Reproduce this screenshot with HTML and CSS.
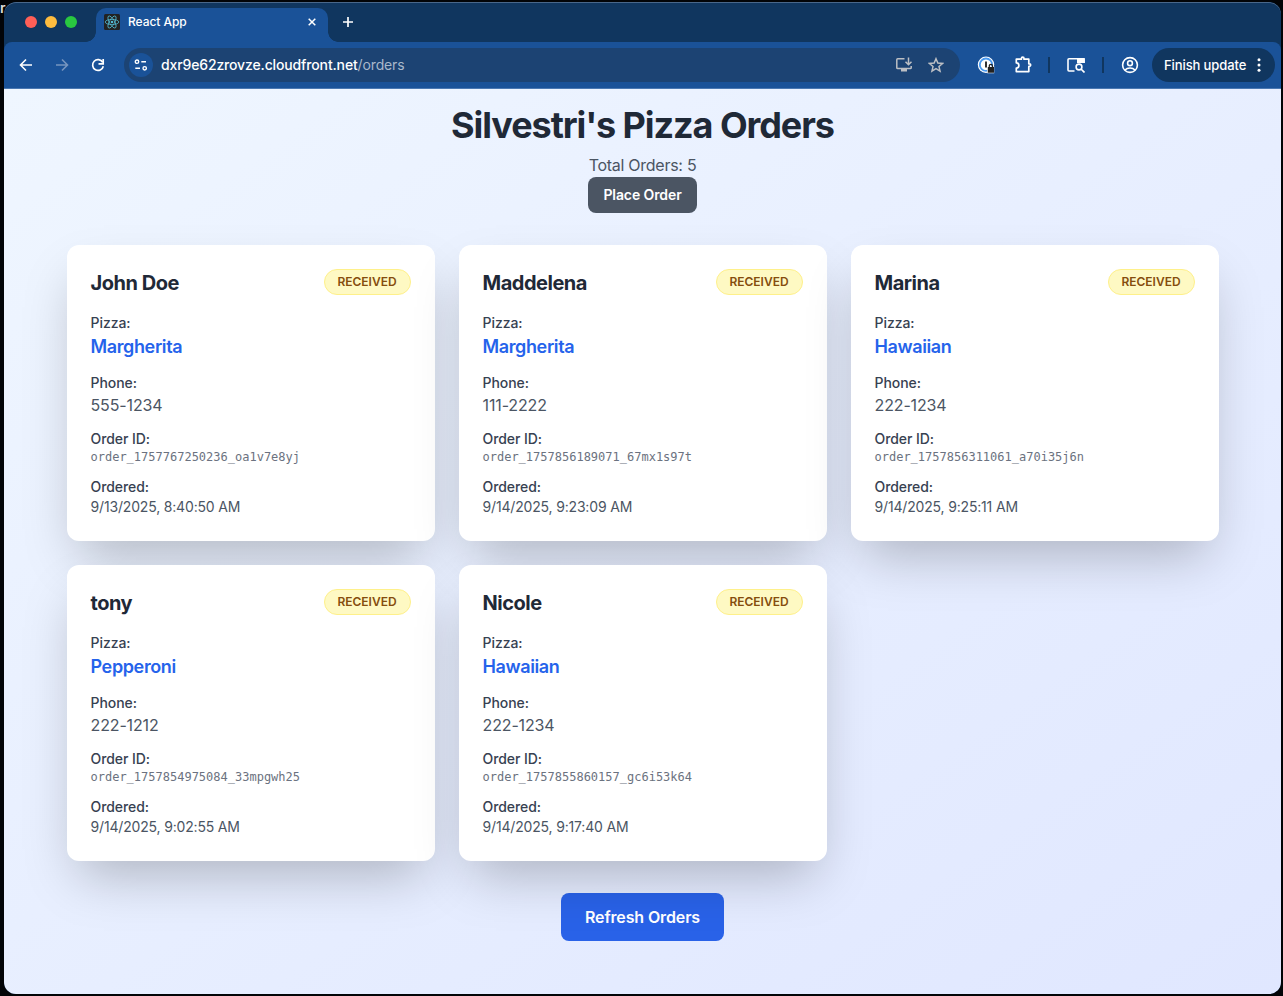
FILE: index.html
```
<!DOCTYPE html>
<html lang="en">
<head>
<meta charset="utf-8">
<title>React App</title>
<link rel="stylesheet" href="styles.css">
</head>
<body>
<span class="desktop-text">r</span>
<div class="window">
  <div class="tabstrip">
    <div class="lights"><i class="red"></i><i class="yellow"></i><i class="green"></i></div>
    <div class="tab">
      <svg class="favicon" width="16" height="16" viewBox="0 0 16 16"><rect width="16" height="16" rx="1.5" fill="#222"/><g fill="none" stroke="#53b9d1" stroke-width=".8"><ellipse cx="8" cy="8" rx="6.8" ry="2.6"/><ellipse cx="8" cy="8" rx="6.8" ry="2.6" transform="rotate(60 8 8)"/><ellipse cx="8" cy="8" rx="6.8" ry="2.6" transform="rotate(120 8 8)"/></g><circle cx="8" cy="8" r="1.3" fill="#53b9d1"/></svg>
      <span class="tab-title">React App</span>
      <svg class="close" width="8" height="8" viewBox="0 0 8 8"><path d="M.7.7l6.6 6.6M7.3.7L.7 7.3" stroke="#fff" stroke-width="1.5"/></svg>
    </div>
    <svg class="newtab" width="12" height="12" viewBox="0 0 12 12"><path d="M6 1v10M1 6h10" stroke="#fff" stroke-width="1.7"/></svg>
  </div>
  <div class="toolbar">
    <div class="nav">
      <svg width="16" height="16" viewBox="0 0 16 16"><path d="M14 8H3M8 2.5L2.5 8 8 13.500" fill="none" stroke="#fff" stroke-width="1.6"/></svg>
      <svg width="16" height="16" viewBox="0 0 16 16"><path d="M2 8h11M8 2.500L13.500 8 8 13.500" fill="none" stroke="#7695bf" stroke-width="1.6"/></svg>
      <svg width="16" height="16" viewBox="0 0 16 16"><path d="M12.700 5.300A5.400 5.400 0 1 0 13.300 9.200" fill="none" stroke="#fff" stroke-width="1.7"/><path d="M13.200 2v4.800H8.500" fill="none" stroke="#fff" stroke-width="1.7"/></svg>
    </div>
    <div class="address">
      <span class="site"><svg width="14" height="12" viewBox="0 0 14 12"><g fill="none" stroke="#fff" stroke-width="1.4"><circle cx="3" cy="2.700" r="1.700"/><path d="M7.300 2.700H12M1.300 9.300H6"/><circle cx="10.700" cy="9.300" r="1.700"/></g></svg></span>
      <span class="url">dxr9e62zrovze.cloudfront.net<span class="path">/orders</span></span>
      <svg class="install" width="18" height="16" viewBox="0 0 18 16"><path d="M9.500 1.800H2.700Q1.800 1.800 1.800 2.700V10.700Q1.800 11.600 2.700 11.600H15.300Q16.200 11.600 16.200 10.700V9" fill="none" stroke="#bcbfc4" stroke-width="1.500"/><path d="M6 12h6v2.500H6z" fill="#bcbfc4"/><path d="M13.500.5v7M10.500 4.700l3 3 3-3" fill="none" stroke="#bcbfc4" stroke-width="1.500"/></svg>
      <svg class="star" width="16" height="16" viewBox="0 0 16 16"><path d="M8 1.700l1.850 4.350 4.700.4-3.560 3.100 1.060 4.600L8 11.700l-4.050 2.450 1.060-4.600L1.450 6.450l4.700-.4z" fill="none" stroke="#bcbfc4" stroke-width="1.500"/></svg>
    </div>
    <div class="extensions">
      <svg width="18" height="18" viewBox="0 0 18 18"><circle cx="9" cy="8.700" r="8.200" fill="#fff"/><circle cx="9" cy="8.700" r="6.200" fill="#fff" stroke="#4a9af0" stroke-width="1.900"/><path d="M9 5.500v6" stroke="#333" stroke-width="2"/><path d="M10.200 10.200h7v7h-7z" fill="#fff"/><path d="M10.800 11h6.200v5.700h-6.200z" fill="#222"/><path d="M12.300 11V9.900a1.600 1.600 0 0 1 3.200 0V11" fill="none" stroke="#222" stroke-width="1.200"/></svg>
      <svg width="18" height="18" viewBox="0 0 18 18"><path d="M2.300 3.200H7.400V2.400a1.300 1.300 0 0 1 2.600 0V3.200H14.800V7.800h.6a1.300 1.300 0 0 1 0 2.600h-.6V15.600H2.300V12a2.600 2.600 0 0 0 0-5.200z" fill="none" stroke="#fff" stroke-width="1.700" stroke-linejoin="round"/></svg>
      <i class="divider"></i>
      <svg width="18" height="16" viewBox="0 0 18 16"><path d="M7.500 14H2Q1 14 1 13V2.700Q1 1.700 2 1.700H16Q17 1.700 17 2.700V6" fill="none" stroke="#fff" stroke-width="1.600"/><path d="M10 1h7.800v5H10z" fill="#fff"/><circle cx="12" cy="10" r="2.900" fill="none" stroke="#fff" stroke-width="1.600"/><path d="M14 12l3.500 3.500" stroke="#fff" stroke-width="1.700"/></svg>
      <i class="divider"></i>
      <svg width="18" height="18" viewBox="0 0 18 18"><g fill="none" stroke="#fff" stroke-width="1.600"><circle cx="9" cy="9" r="7.400"/><circle cx="9" cy="7.200" r="2.400"/><path d="M4 14c2.500-2.700 7.500-2.700 10 0"/></g></svg>
    </div>
    <div class="update"><span>Finish update</span><svg width="4" height="16" viewBox="0 0 4 16"><g fill="#fff"><circle cx="2" cy="2.700" r="1.500"/><circle cx="2" cy="8" r="1.500"/><circle cx="2" cy="13.300" r="1.500"/></g></svg></div>
  </div>
  <main class="page">
    <h1>Silvestri's Pizza Orders</h1>
    <p class="total">Total Orders: 5</p>
    <button class="place">Place Order</button>
    <div class="grid">
      <article class="card"><header><h2>John Doe</h2><span class="badge">RECEIVED</span></header>
        <dl><dt>Pizza:</dt><dd class="pizza">Margherita</dd><dt>Phone:</dt><dd class="phone">555-1234</dd><dt>Order ID:</dt><dd class="id">order_1757767250236_oa1v7e8yj</dd><dt>Ordered:</dt><dd class="date">9/13/2025, 8:40:50 AM</dd></dl></article>
      <article class="card"><header><h2>Maddelena</h2><span class="badge">RECEIVED</span></header>
        <dl><dt>Pizza:</dt><dd class="pizza">Margherita</dd><dt>Phone:</dt><dd class="phone">111-2222</dd><dt>Order ID:</dt><dd class="id">order_1757856189071_67mx1s97t</dd><dt>Ordered:</dt><dd class="date">9/14/2025, 9:23:09 AM</dd></dl></article>
      <article class="card"><header><h2>Marina</h2><span class="badge">RECEIVED</span></header>
        <dl><dt>Pizza:</dt><dd class="pizza">Hawaiian</dd><dt>Phone:</dt><dd class="phone">222-1234</dd><dt>Order ID:</dt><dd class="id">order_1757856311061_a70i35j6n</dd><dt>Ordered:</dt><dd class="date">9/14/2025, 9:25:11 AM</dd></dl></article>
      <article class="card"><header><h2>tony</h2><span class="badge">RECEIVED</span></header>
        <dl><dt>Pizza:</dt><dd class="pizza">Pepperoni</dd><dt>Phone:</dt><dd class="phone">222-1212</dd><dt>Order ID:</dt><dd class="id">order_1757854975084_33mpgwh25</dd><dt>Ordered:</dt><dd class="date">9/14/2025, 9:02:55 AM</dd></dl></article>
      <article class="card"><header><h2>Nicole</h2><span class="badge">RECEIVED</span></header>
        <dl><dt>Pizza:</dt><dd class="pizza">Hawaiian</dd><dt>Phone:</dt><dd class="phone">222-1234</dd><dt>Order ID:</dt><dd class="id">order_1757855860157_gc6i53k64</dd><dt>Ordered:</dt><dd class="date">9/14/2025, 9:17:40 AM</dd></dl></article>
    </div>
    <button class="refresh">Refresh Orders</button>
  </main>
</div>
</body>
</html>
```

FILE: styles.css
```
* { box-sizing: border-box; }
body {
  margin: 0;
  height: 996px;
  padding: 2px 2px 2px 4px;
  overflow: hidden;
  background: #020407;
  font-family: Inter, "Liberation Sans", sans-serif;
}
h1, h2, p, dl, dd { margin: 0; }
svg { display: block; flex: none; }
button { border: 0; font-family: inherit; color: #fff; }
.desktop-text { position: absolute; left: 0; top: 0; color: #ddd; font-size: 14px; font-weight: 600; line-height: 16px; }
.window {
  position: relative;
  height: 992px;
  border-radius: 12px;
  overflow: hidden;
  display: flex;
  flex-direction: column;
  background: #10365f;
}
.tabstrip { height: 40px; display: flex; align-items: center; border-radius: 12px 12px 0 0; box-shadow: inset 0 1px #49678a; }
.lights { display: flex; gap: 8px; padding-left: 21px; width: 92px; }
.lights i { width: 12px; height: 12px; border-radius: 50%; }
.red { background: #ff5f57; }
.yellow { background: #febc3f; }
.green { background: #29c840; }
.tab {
  position: relative;
  width: 232px;
  height: 34px;
  align-self: flex-end;
  display: flex;
  align-items: center;
  padding: 0 12px 6px 8px;
  border-radius: 10px 10px 0 0;
  background: #1a5298;
}
.tab::before, .tab::after { content: ""; position: absolute; bottom: 0; width: 10px; height: 10px; }
.tab::before { left: -10px; background: radial-gradient(circle at 0 0, transparent 9.5px, #1a5298 10px); }
.tab::after { right: -10px; background: radial-gradient(circle at 100% 0, transparent 9.5px, #1a5298 10px); }
.tab-title { flex: 1; margin-left: 8px; padding-bottom: 1px; font-size: 12px; font-weight: 500; letter-spacing: -.05px; color: #fff; }
.newtab { margin-left: 14px; }
.toolbar {
  height: 47px;
  display: flex;
  align-items: center;
  background: #1a5298;
  border-bottom: 1px solid #4a78b2;
  border-radius: 8px 8px 0 0;
}
.nav { display: flex; gap: 20px; padding-left: 14px; width: 120px; }
.address {
  width: 836px;
  height: 34px;
  border-radius: 17px;
  background: #1c4373;
  display: flex;
  align-items: center;
  padding: 0 16px 0 5px;
}
.site { width: 24px; height: 24px; border-radius: 50%; background: #1a5298; display: flex; align-items: center; justify-content: center; }
.url { flex: 1; margin-left: 8px; padding-bottom: 1px; font-size: 14px; font-weight: 500; letter-spacing: -.14px; color: #fff; }
.path { color: #a9b8cb; font-weight: 400; }
.star { margin-left: 15px; }
.extensions { width: 192px; display: flex; align-items: center; padding-left: 17px; }
.extensions svg:nth-child(2) { margin-left: 19px; }
.divider { width: 2px; height: 16px; margin: 0 17px 0 16px; background: #10365f; }
.divider ~ .divider { margin: 0 17px; }
.update {
  width: 123px;
  height: 34px;
  border-radius: 17px;
  background: #10365f;
  color: #fff;
  font-size: 13px;
  font-weight: 500;
  letter-spacing: -.1px;
  display: flex;
  align-items: center;
  justify-content: space-between;
  padding: 0 14px 0 12px;
  white-space: nowrap;
}
.page {
  flex: 1;
  display: flex;
  flex-direction: column;
  align-items: center;
  padding: 16px 62.5px 0;
  background: linear-gradient(to bottom right, #eff6ff, #e0e7ff);
}
h1 { font-size: 36px; line-height: 40px; font-weight: 700; letter-spacing: -1.08px; color: #1f2937; margin-bottom: 8px; white-space: nowrap; }
.total { font-size: 16px; line-height: 24px; letter-spacing: -.27px; color: #4b5563; }
.place { width: 109px; height: 36px; padding: 0 0 1px; border-radius: 8px; background: #4b5563; font-size: 14px; font-weight: 600; letter-spacing: -.1px; }
.grid { margin-top: 32px; display: grid; grid-template-columns: repeat(3, 368px); gap: 24px; }
.card { position: relative; height: 296px; padding: 24px; border-radius: 12px; background: #fff; box-shadow: 0 25px 50px -12px rgba(0, 0, 0, .25); }
.card header { display: flex; justify-content: space-between; align-items: flex-start; margin-bottom: 16px; }
h2 { font-size: 20px; line-height: 28px; font-weight: 700; letter-spacing: -.48px; color: #1f2937; }
.badge { width: 87px; height: 26px; border: 1px solid #fef08a; border-radius: 13px; background: #fef9c3; color: #854d0e; font-size: 12px; line-height: 24px; font-weight: 600; text-align: center; }
dt { font-size: 14px; line-height: 20px; font-weight: 500; letter-spacing: -.06px; color: #374151; }
dd { margin-bottom: 12px; color: #4b5563; }
.pizza { font-size: 18px; line-height: 28px; font-weight: 600; letter-spacing: -.37px; color: #2563eb; }
.phone { font-size: 16px; line-height: 24px; letter-spacing: -.13px; }
.id { font-family: "DejaVu Sans Mono", monospace; font-size: 12px; line-height: 16px; color: #6b7280; }
.date { font-size: 14px; line-height: 20px; letter-spacing: -.17px; }
.refresh { margin-top: 32px; width: 163px; height: 48px; padding: 0; border-radius: 8px; background: #2962e8; font-size: 16px; font-weight: 600; letter-spacing: -.13px; }
```
